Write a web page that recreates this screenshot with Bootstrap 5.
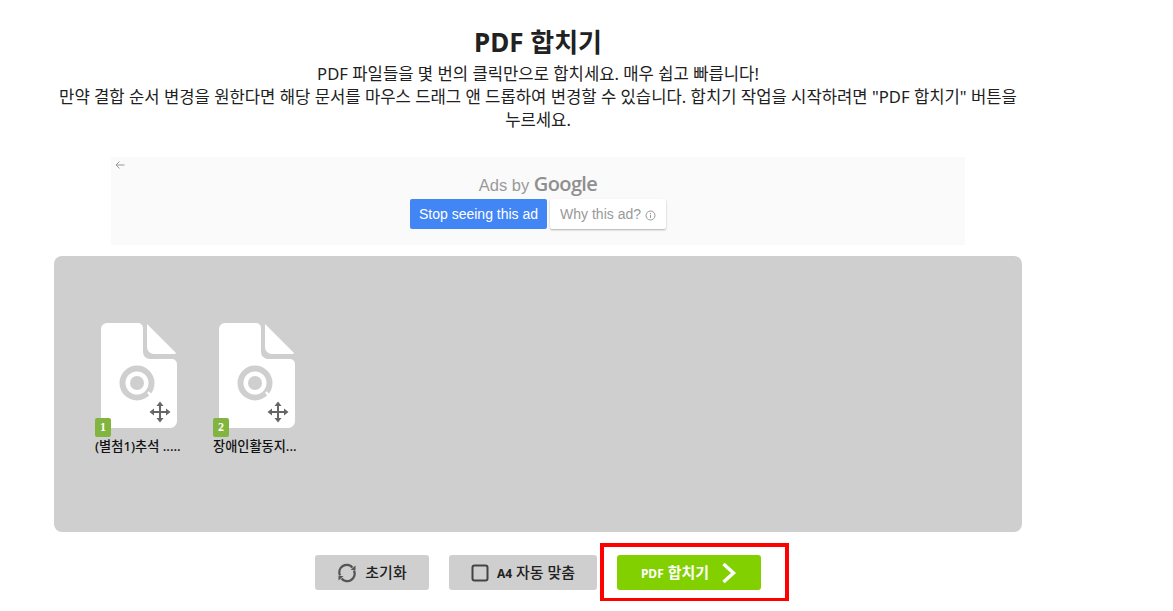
<!DOCTYPE html>
<html lang="ko">
<head>
    <meta charset="UTF-8">
    <meta name="viewport" content="width=device-width, initial-scale=1.0">
    <title>PDF 합치기</title>
    <link href="https://cdn.jsdelivr.net/npm/bootstrap@5.3.0/dist/css/bootstrap.min.css" rel="stylesheet">
    <style>
        body { font-family: "Noto Sans", "Noto Sans CJK KR", sans-serif; color: #212121; overflow: hidden; }
        .page-wrap { width: 968px; margin-left: 54px; padding-top: 24px; }
        .page-title { font-size: 26px; font-weight: 700; line-height: 36px; margin: 0; }
        .page-desc { font-size: 16.65px; line-height: 23px; margin: 0; height: 97px; padding-top: 2px; }
        .ad-box { width: 854px; height: 88px; margin: 0 auto 11px; background: #fafafa; font-family: "Liberation Sans", sans-serif; padding-top: 13px; }
        .ad-back { left: 4px; top: 3px; }
        .ad-label { color: #999; font-size: 16.5px; line-height: 27px; }
        .ad-label b { font-family: "Open Sans", sans-serif; font-size: 20px; font-weight: 600; letter-spacing: -.6px; color: #8f8f8f; }
        .ad-actions { gap: 3px; }
        .ad-btn { height: 30px; font-size: 14px; line-height: 30px; border-radius: 2px; padding: 0 8px; }
        .ad-stop { background: #4285f4; color: #fff; width: 137px; padding: 0 9px; white-space: nowrap; }
        .ad-why { background: #fff; color: #999; box-shadow: 0 1px 2px rgba(0,0,0,.3); width: 116px; white-space: nowrap; }
        .drop-area { height: 276px; background: #cfcfcf; border-radius: 8px; padding: 67px 0 0 41px; gap: 30px; }
        .file-item { width: 88px; }
        .file-svg { display: block; margin-left: 6px; }
        .file-num { left: 0; top: 95px; width: 16px; height: 19px; background: #82b440; color: #fff; font-family: "Liberation Serif", serif; font-weight: 700; font-size: 12px; line-height: 19px; border-radius: 2px; text-align: center; }
        .file-name { font-size: 13.2px; font-weight: 500; line-height: 16px; margin-top: 9px; white-space: nowrap; color: #111; }
        .btn-row { height: 69px; padding-top: 23px; margin-left: 261px; }
        .act-btn { height: 35px; background: #cfcfcf; border-radius: 3px; font-size: 15px; font-weight: 500; color: #222; white-space: nowrap; }
        .act-reset { width: 114px; margin-right: 20px; }
        .act-fit { width: 148px; margin-right: 20px; }
        .act-fit small, .act-merge small { font-size: 12px; font-weight: 700; }
        .merge-outline { left: -17px; top: -12px; width: 189px; height: 59px; border: 4px solid #f00; }
        .act-merge { width: 144px; background: #83d000; color: #fff; font-weight: 700; }
        .merge-arrow { margin-left: 4px; }
    </style>
</head>
<body>
    <div class="page-wrap">
        <h1 class="page-title text-center">PDF 합치기</h1>
        <p class="page-desc text-center">PDF 파일들을 몇 번의 클릭만으로 합치세요. 매우 쉽고 빠릅니다!<br>만약 결합 순서 변경을 원한다면 해당 문서를 마우스 드래그 앤 드롭하여 변경할 수 있습니다. 합치기 작업을 시작하려면 "PDF 합치기" 버튼을 누르세요.</p>

        <div class="ad-box position-relative text-center">
            <svg class="ad-back position-absolute" width="10" height="10" viewBox="0 0 10 10" fill="none" stroke="#999" stroke-width="1"><path d="M9.5 5H1M4.5 1.5L1 5l3.5 3.5"/></svg>
            <div class="ad-label">Ads by <b>Google</b></div>
            <div class="ad-actions d-flex justify-content-center">
                <div class="ad-btn ad-stop">Stop seeing this ad</div>
                <div class="ad-btn ad-why">Why this ad?
                    <svg width="11" height="11" viewBox="0 0 11 11" fill="none" stroke="#999"><circle cx="5.5" cy="5.5" r="4.5"/><path d="M5.5 5v3M5.5 3v1.2"/></svg>
                </div>
            </div>
        </div>

        <div class="drop-area d-flex align-items-start">
            <div class="file-item position-relative">
                <svg class="file-svg" width="77" height="106" viewBox="0 0 77 106"><use href="#fileIcon"/></svg>
                <div class="file-num position-absolute">1</div>
                <div class="file-name">(별첨1)추석 .....</div>
            </div>
            <div class="file-item position-relative">
                <svg class="file-svg" width="77" height="106" viewBox="0 0 77 106"><use href="#fileIcon"/></svg>
                <div class="file-num position-absolute">2</div>
                <div class="file-name">장애인활동지...</div>
            </div>
        </div>

        <div class="btn-row d-flex align-items-start">
            <div class="act-btn act-reset d-flex align-items-center justify-content-center gap-2">
                <svg width="20" height="20" viewBox="0 0 20 20" fill="none" stroke="#555" stroke-width="2.4"><path d="M3 12.5A7.5 7.5 0 0 1 15.5 4.5"/><path d="M17 7.5A7.5 7.5 0 0 1 4.5 15.5"/><path d="M13.5 7h5V2.5z" fill="#555" stroke="none"/><path d="M6.5 13h-5v4.5z" fill="#555" stroke="none"/></svg>
                <span>초기화</span>
            </div>
            <div class="act-btn act-fit d-flex align-items-center justify-content-center gap-2">
                <svg width="18" height="18" viewBox="0 0 18 18" fill="none" stroke="#444" stroke-width="2"><rect x="1.5" y="1.5" width="15" height="15" rx="2"/></svg>
                <span><small>A4</small> 자동 맞춤</span>
            </div>
            <div class="position-relative">
                <div class="merge-outline position-absolute"></div>
                <div class="act-btn act-merge d-flex align-items-center justify-content-center gap-2">
                    <span><small>PDF</small> 합치기</span>
                    <svg class="merge-arrow" width="16" height="22" viewBox="0 0 16 22" fill="none" stroke="#fff" stroke-width="3.4"><path d="M2.500 2l10 9-10 9"/></svg>
                </div>
            </div>
        </div>
    </div>

    <svg width="0" height="0" class="position-absolute">
        <defs>
            <g id="fileIcon">
                <path d="M6 0h31a5 5 0 0 1 5 5v24a7 7 0 0 0 7 7h22a5 5 0 0 1 5 5v57a7 7 0 0 1-7 7H7a7 7 0 0 1-7-7V6a6 6 0 0 1 6-6z" fill="#fff"/>
                <path d="M46 1l29 29q0 1-2 1H53a7 7 0 0 1-7-7z" fill="#fff"/>
                <circle cx="36" cy="60" r="14.500" fill="none" stroke="#cfcfcf" stroke-width="6"/>
                <circle cx="36" cy="60" r="7" fill="#cfcfcf"/>
                <path d="M47 69l4 5" stroke="#fff" stroke-width="2.500"/>
                <path d="M59 81v16M51 89h16" fill="none" stroke="#666" stroke-width="2"/>
                <path d="M59 78.500l-3.500 4.500h7zM59 99.500l-3.500-4.500h7zM48.500 89l4.500-3.500v7zM69.500 89l-4.500-3.500v7z" fill="#666"/>
            </g>
        </defs>
    </svg>
    <script src="https://cdn.jsdelivr.net/npm/bootstrap@5.3.0/dist/js/bootstrap.bundle.min.js"></script>
</body>
</html>
